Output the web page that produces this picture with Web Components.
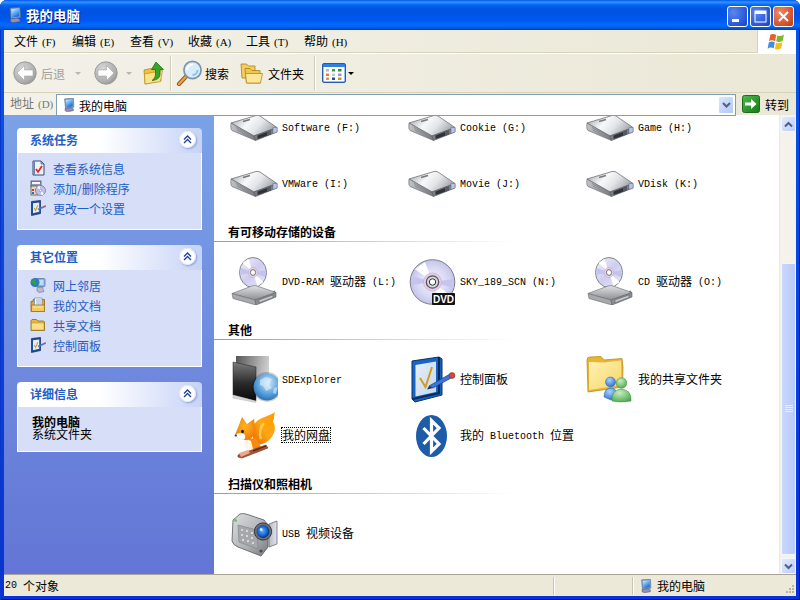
<!DOCTYPE html>
<html lang="zh-CN">
<head>
<meta charset="utf-8">
<title>我的电脑</title>
<style>
  html, body { margin: 0; padding: 0; background: #fff; }
  body { width: 800px; height: 600px; overflow: hidden; font: 12px "Noto Sans CJK SC", sans-serif; }
</style>
</head>
<body>
<xp-window>
  <xp-titlebar title="我的电脑"></xp-titlebar>
  <xp-menubar></xp-menubar>
  <xp-toolbar></xp-toolbar>
  <xp-addressbar></xp-addressbar>
  <xp-main>
    <xp-sidebar slot="side">
      <xp-panel title="系统任务">
        <xp-link icon="sysinfo">查看系统信息</xp-link>
        <xp-link icon="addremove">添加/删除程序</xp-link>
        <xp-link icon="settings">更改一个设置</xp-link>
      </xp-panel>
      <xp-panel title="其它位置">
        <xp-link icon="network">网上邻居</xp-link>
        <xp-link icon="mydocs">我的文档</xp-link>
        <xp-link icon="folder16">共享文档</xp-link>
        <xp-link icon="settings">控制面板</xp-link>
      </xp-panel>
      <xp-panel title="详细信息" details>
        <b>我的电脑</b><br>系统文件夹
      </xp-panel>
    </xp-sidebar>
    <xp-content slot="content">
      <xp-grid>
        <xp-item icon="drive" label="Software (F:)"></xp-item>
        <xp-item icon="drive" label="Cookie (G:)"></xp-item>
        <xp-item icon="drive" label="Game (H:)"></xp-item>
        <xp-item icon="drive" label="VMWare (I:)"></xp-item>
        <xp-item icon="drive" label="Movie (J:)"></xp-item>
        <xp-item icon="drive" label="VDisk (K:)"></xp-item>
      </xp-grid>
      <xp-section title="有可移动存储的设备"></xp-section>
      <xp-grid>
        <xp-item icon="cddrive" label="DVD-RAM 驱动器 (L:)"></xp-item>
        <xp-item icon="dvd" label="SKY_189_SCN (N:)"></xp-item>
        <xp-item icon="cddrive" label="CD 驱动器 (O:)"></xp-item>
      </xp-grid>
      <xp-section title="其他"></xp-section>
      <xp-grid>
        <xp-item icon="sdexplorer" label="SDExplorer"></xp-item>
        <xp-item icon="control" label="控制面板"></xp-item>
        <xp-item icon="shared" label="我的共享文件夹"></xp-item>
        <xp-item icon="fox" label="我的网盘" focused></xp-item>
        <xp-item icon="bluetooth" label="我的 Bluetooth 位置"></xp-item>
      </xp-grid>
      <xp-section title="扫描仪和照相机"></xp-section>
      <xp-grid>
        <xp-item icon="camera" label="USB 视频设备"></xp-item>
      </xp-grid>
    </xp-content>
    <xp-scrollbar slot="scroll"></xp-scrollbar>
  </xp-main>
  <xp-statusbar></xp-statusbar>
</xp-window>

<script>
const MENUS = [['文件', '(F)'], ['编辑', '(E)'], ['查看', '(V)'], ['收藏', '(A)'], ['工具', '(T)'], ['帮助', '(H)']];

const ICONS = {
  computer: { box: 16, body: `
    <defs><linearGradient id="s" x1="0" y1="0" x2=".6" y2="1"><stop offset="0" stop-color="#e4f4ff"/><stop offset=".5" stop-color="#63b4f4"/><stop offset="1" stop-color="#1668d8"/></linearGradient></defs>
    <path d="M3 1 13 .3 13.5 10.5 4 12Z" fill="#8fa6c8" stroke="#4f618c" stroke-width=".7"/>
    <path d="M4.3 2.2 12 1.6 12.3 9.4 5 10.6Z" fill="url(#s)"/>
    <path d="M3.5 12 10 11 13 12.5V14.5L6 15.8 3.5 14.5Z" fill="#9090b6" stroke="#55557f" stroke-width=".6"/>` },
  sysinfo: { box: 16, body: `
    <path d="M3 1H11L14 4V15H3Z" fill="#eef2fb" stroke="#39496e"/>
    <path d="M11 1V4H14Z" fill="#8fb0e8" stroke="#39496e" stroke-width=".6"/>
    <path d="M3.5 1.5H5V14.5H3.5Z" fill="#6a80ad"/>
    <path d="M6 9 8 12 12 6" fill="none" stroke="#e02b20" stroke-width="1.8"/>` },
  addremove: { box: 16, body: `
    <rect x="1" y="1" width="10" height="6" fill="#8d9cba" stroke="#46506c" stroke-width=".8"/>
    <rect x="2" y="2" width="8" height="2" fill="#f2f4f8"/>
    <rect x="1" y="6" width="7" height="9" fill="#e3dcc3" stroke="#5c5844" stroke-width=".8"/>
    <rect x="2" y="9" width="2" height="2" fill="#d33"/><rect x="5" y="9" width="2" height="2" fill="#3a3"/>
    <rect x="2" y="12" width="2" height="2" fill="#36c"/>
    <circle cx="10.5" cy="10.5" r="5" fill="#bfc0ee" stroke="#6d6d98" stroke-width=".7"/>
    <path d="M10.5 10.5 7 7 9.5 5.7Z M10.5 10.5 14 14 11.5 15.3Z" fill="#fff"/>
    <circle cx="10.5" cy="10.5" r="1.2" fill="#fff" stroke="#66667f" stroke-width=".5"/>` },
  settings: { box: 16, body: `
    <path d="M1.5 1.5 10.5 .5V13.5L1.5 15.5Z" fill="#1a4f9c" stroke="#172a55" stroke-width=".7"/>
    <path d="M3 3.2 9.2 2.4V11.8L3 13.2Z" fill="#e6edf9"/>
    <path d="M4.2 8 5.6 10.4 7.8 5.2" fill="none" stroke="#cfa521" stroke-width="1.1"/>
    <path d="M8 9.5 14.5 6.5" stroke="#3f78d8" stroke-width="1.7"/>
    <circle cx="15" cy="6.3" r="1" fill="#d04a3a"/>` },
  network: { box: 16, body: `
    <rect x="5.5" y="1.5" width="9.5" height="8" rx="1" fill="#7fb2ee" stroke="#6a7ba5" stroke-width=".8"/>
    <path d="M7 3H13.5V8H7Z" fill="#bcdcfb"/>
    <path d="M7 10.5H13V12.5L14 14.5 9 15.5 7 14Z" fill="#b9b9d3" stroke="#72729a" stroke-width=".6"/>
    <circle cx="5" cy="5.5" r="4.5" fill="#2a75d9"/>
    <path d="M2 3.5 4.5 2 6.5 3 5.5 5 6.5 6.5 4.5 9 3.5 6.5 1.2 5.2ZM7.5 5 9 5.5 8.5 8 7.3 7Z" fill="#2fa33a"/>` },
  mydocs: { box: 16, body: `
    <path d="M1 4.5H3V2.5H14.5V14.5H1Z" fill="#e2a93a" stroke="#8a6313" stroke-width=".8"/>
    <path d="M4.5 1H12V9H4.5Z" fill="#fff" stroke="#6d7fa8" stroke-width=".7"/>
    <path d="M6 3H11M6 5H11M6 7H11" stroke="#88a7dd"/>
    <path d="M1.5 8H14.5V14.5H1.5Z" fill="#f5cb5b" stroke="#96701a" stroke-width=".7"/>
    <path d="M3 10H13" stroke="#fbe7a5"/>` },
  folder16: { box: 16, body: `
    <path d="M1 3.5 2 2.5H6.5L8 4H13.5L14.5 5V13.5H1Z" fill="#e8b53f" stroke="#8a6a15" stroke-width=".8"/>
    <path d="M1.5 6H14V13H1.5Z" fill="#fbdf86" stroke="#b08a26" stroke-width=".5"/>` },
  back: { box: 24, body: `
    <defs><radialGradient id="g" cx=".35" cy=".3" r=".85"><stop offset="0" stop-color="#d6d6d6"/><stop offset=".7" stop-color="#aeaeae"/><stop offset="1" stop-color="#868686"/></radialGradient></defs>
    <circle cx="12" cy="12" r="11.2" fill="url(#g)" stroke="#9b9b9b"/>
    <path d="M4 12 11.5 4.5V9H20V15H11.5V19.5Z" fill="#fff" stroke="#999" stroke-width=".5"/>` },
  forward: { box: 24, body: `
    <defs><radialGradient id="g" cx=".35" cy=".3" r=".85"><stop offset="0" stop-color="#d6d6d6"/><stop offset=".7" stop-color="#aeaeae"/><stop offset="1" stop-color="#868686"/></radialGradient></defs>
    <circle cx="12" cy="12" r="11.2" fill="url(#g)" stroke="#9b9b9b"/>
    <path d="M20 12 12.5 4.5V9H4V15H12.5V19.5Z" fill="#fff" stroke="#999" stroke-width=".5"/>` },
  up: { box: 24, body: `
    <path d="M1 9 8 7.5 10 9 16.5 7.5 18 20 2 23Z" fill="#f0c33f" stroke="#a97f15" stroke-width=".7"/>
    <path d="M1.5 13 19.5 9.5 17.5 20.5 2 23Z" fill="#fde28a" stroke="#b88e22" stroke-width=".7"/>
    <path d="M13 1 20.5 8.5H17V13C17 17 14 19 9 19.5 12 17.5 12.5 15 12.5 13V8.5H8.5Z" fill="#38a526" stroke="#1e6f18" stroke-width=".8"/>` },
  search: { box: 26, body: `
    <path d="M3 24 10.5 16" stroke="#8a5a1c" stroke-width="4.2" stroke-linecap="round"/>
    <path d="M3 24 10.5 16" stroke="#f0a040" stroke-width="2.4" stroke-linecap="round"/>
    <circle cx="16.5" cy="10" r="8.6" fill="#d8ecfb" stroke="#7d93ad" stroke-width="1.7"/>
    <path d="M11 10A6 6 0 0 1 17 4.5" fill="none" stroke="#fff" stroke-width="2"/>
    <path d="M21.5 10A5 5 0 0 1 16.5 15" fill="none" stroke="#8dc0ea" stroke-width="2"/>` },
  folders: { box: 24, body: `
    <path d="M1 3H6.5L8.5 5H15V17H2Z" fill="#f2cd60" stroke="#a8821c" stroke-width=".8"/>
    <path d="M5 7.5H10L12 9.5H20L20.5 22H6.5Z" fill="#f0c64e" stroke="#a8821c" stroke-width=".8"/>
    <path d="M5.5 12.5H22.5L20.5 22H6.5Z" fill="#fde69a" stroke="#b08a22" stroke-width=".8"/>` },
  views: { box: 24, body: `
    <rect x=".5" y=".5" width="23" height="19" rx="1.5" fill="#2f7fe6" stroke="#235cb0"/>
    <rect x="1.5" y="4" width="21" height="14.5" fill="#fff"/>
    <path d="M4 6h3v2.5H4z" fill="#aeb7c6"/><path d="M10 6h3v2.5h-3z" fill="#3c9b46"/><path d="M16 6h3.5v2.5H16z" fill="#2f8a3a"/>
    <path d="M4 10.5h3V13H4z" fill="#ee7a4a"/><path d="M10 10.5h3V13h-3z" fill="#c4cbd8"/><path d="M16 10.5h3.5V13H16z" fill="#7f9fdc"/>
    <path d="M4 14.5h3V17H4z" fill="#ef8a5a"/><path d="M10 14.5h3V17h-3z" fill="#1f4da8"/><path d="M16 14.5h3.5V17H16z" fill="#c49a20"/>` },
  go: { box: 18, body: `
    <defs><linearGradient id="g" x1="0" y1="0" x2="1" y2="1"><stop offset="0" stop-color="#4fb94f"/><stop offset="1" stop-color="#157a15"/></linearGradient></defs>
    <rect x=".5" y=".5" width="17" height="17" rx="2" fill="url(#g)" stroke="#1d6b1d"/>
    <path d="M3 7.5H9V4L14.5 9 9 14V10.5H3Z" fill="#fff"/>` },
  flag: { box: 20, body: `
    <path d="M3.2 3C5 1.5 7 2 9.2 3L8 9.2C6 8.2 3.8 8 2 9.2Z" fill="#e8602c"/>
    <path d="M10.3 3.4C12.5 4.4 14.5 4.4 17 2.6L15.7 8.8C13.5 10.3 11.3 10.3 9.2 9.6Z" fill="#7bb72e"/>
    <path d="M1.8 10.4C3.6 9.2 5.8 9.3 7.8 10.4L6.6 16.5C4.6 15.3 2.5 15.3.6 16.7Z" fill="#3f8fe0"/>
    <path d="M9 10.8C11 11.6 13.2 11.6 15.5 10.1L14.2 16.2C12 17.8 9.8 17.8 7.8 17Z" fill="#f4bd1c"/>` },
  drive: { box: 48, body: `
    <defs>
      <linearGradient id="t" x1="0" y1="0" x2="1" y2=".4"><stop offset="0" stop-color="#9ea2a6"/><stop offset=".45" stop-color="#f7f8f9"/><stop offset=".7" stop-color="#e2e4e8"/><stop offset="1" stop-color="#a8acb2"/></linearGradient>
      <linearGradient id="f" x1="0" y1="0" x2="1" y2="0"><stop offset="0" stop-color="#c2c4c8"/><stop offset="1" stop-color="#74787e"/></linearGradient>
    </defs>
    <path d="M1 20 26 12.5Q28 12 30 13L47 24.5 24 33Z" fill="url(#t)" stroke="#6f7378" stroke-width=".8"/>
    <path d="M1 20 24 33 25.5 37.5 2 27.5Q.5 26 .8 23Z" fill="url(#f)" stroke="#5f6368" stroke-width=".6"/>
    <path d="M24 33 47 24.5V29L25.5 37.5Z" fill="#7b7f85" stroke="#4f5257" stroke-width=".6"/>
    <path d="M27.5 32.5 41 27.5V31.2L27.5 36Z" fill="#2f3236"/>
    <path d="M37 29 41 27.5V31.2L37 32.7Z" fill="#585c62"/>
    <path d="M43 24.5 47 24.5V29L43 30.5Z" fill="#b9c3ea" stroke="#676f8f" stroke-width=".5"/>
    <path d="M6 24.5 21 32.5M7 27 21 34" stroke="#82868b" stroke-width=".8"/>
    <path d="M13 18.5 20 16.5" stroke="#777b80" stroke-width="1.6"/>` },
  cddrive: { box: 48, body: `
    <defs>
      <linearGradient id="d" x1="0" y1="0" x2="1" y2="1"><stop offset="0" stop-color="#f2f2fb"/><stop offset=".5" stop-color="#cfcdf0"/><stop offset="1" stop-color="#e9e9f7"/></linearGradient>
      <linearGradient id="f" x1="0" y1="0" x2="0" y2="1"><stop offset="0" stop-color="#e2e3e6"/><stop offset="1" stop-color="#8b8e93"/></linearGradient>
    </defs>
    <ellipse cx="23" cy="15.5" rx="13.5" ry="15" fill="url(#d)" stroke="#84868c"/>
    <path d="M23 15.5 12.5 6 18.5 2ZM23 15.5 33.5 25 27.5 29Z" fill="#fff"/>
    <path d="M23 15.5 10 18 11 11ZM23 15.5 36 13 35 20Z" fill="#c3c4ee"/>
    <ellipse cx="23" cy="15.5" rx="4.6" ry="5" fill="#e8d5ea" stroke="#c9a7d0" stroke-width=".7"/>
    <ellipse cx="23" cy="15.5" rx="2.6" ry="2.9" fill="#fff" stroke="#6e6e72"/>
    <path d="M2 36.5 22 29Q25 28 27 29L46 35.5 25 43Z" fill="url(#f)" stroke="#75787d" stroke-width=".7"/>
    <path d="M2 36.5 25 43 26 48 3 41.5Z" fill="#a7a9ad" stroke="#66696e" stroke-width=".6"/>
    <path d="M25 43 46 35.5V40L26 48Z" fill="#8a8d92" stroke="#5c5f64" stroke-width=".6"/>
    <path d="M29 43 43 38V40.5L29 45.8Z" fill="#c9cbcf" stroke="#55585c" stroke-width=".5"/>
    <path d="M43 34.8 45 34.2" stroke="#3ba33b" stroke-width="1.4"/>` },
  dvd: { box: 48, body: `
    <defs><radialGradient id="d" cx=".5" cy=".5" r=".55"><stop offset="0" stop-color="#f4f4fc"/><stop offset=".6" stop-color="#d9d9f4"/><stop offset="1" stop-color="#bdbde6"/></radialGradient></defs>
    <circle cx="24.5" cy="25" r="22.3" fill="url(#d)" stroke="#7b7d84"/>
    <path d="M24.5 25 7 12 17 5ZM24.5 25 42 38 32 45Z" fill="#fff"/>
    <path d="M24.5 25 3 28 3.5 19ZM24.5 25 46 22 45.5 31Z" fill="#c4c4ef"/>
    <circle cx="24.5" cy="25" r="9" fill="#e6cfe8" stroke="#d2a8d6" stroke-width=".8"/>
    <circle cx="24.5" cy="25" r="6.2" fill="#d6d6dc" stroke="#55565b" stroke-width="1.3"/>
    <circle cx="24.5" cy="25" r="3.2" fill="#fff" stroke="#333" stroke-width="1"/>
    <rect x="24" y="36" width="23" height="12" rx="1" fill="#131313"/>
    <text x="35.5" y="45.6" text-anchor="middle" font-family="Liberation Sans, sans-serif" font-weight="700" font-size="10" fill="#fff">DVD</text>` },
  sdexplorer: { box: 48, body: `
    <defs>
      <linearGradient id="b" x1="0" y1="0" x2="1" y2=".2"><stop offset="0" stop-color="#555"/><stop offset="1" stop-color="#cfcfcf"/></linearGradient>
      <linearGradient id="f" x1="0" y1="0" x2="0" y2="1"><stop offset="0" stop-color="#7c7c7c"/><stop offset=".55" stop-color="#2a2a2a"/><stop offset="1" stop-color="#080808"/></linearGradient>
      <radialGradient id="g" cx=".55" cy=".35" r=".75"><stop offset="0" stop-color="#cfe8fb"/><stop offset=".6" stop-color="#4f9ad8"/><stop offset="1" stop-color="#1f5e9e"/></radialGradient>
    </defs>
    <path d="M6 1H39V36H6Z" fill="url(#b)"/>
    <path d="M3 7 26 12V46L3 40Z" fill="url(#f)" stroke="#222" stroke-width=".5"/>
    <path d="M3 40 26 46V47.5L3 43Z" fill="#d9d9d9" stroke="#aaa" stroke-width=".4"/>
    <circle cx="37" cy="32" r="15" fill="#000" opacity=".18"/>
    <circle cx="37" cy="32" r="13.5" fill="url(#g)"/>
    <path d="M30 25 36 22 42 24 39 29 42 33 36 36 33 31 30 30ZM44 33 47.5 32 46 39 43 38Z" fill="#eaf5fd" opacity=".55"/>` },
  control: { box: 48, body: `
    <defs><linearGradient id="p" x1="0" y1="0" x2="1" y2="1"><stop offset="0" stop-color="#e8eff9"/><stop offset="1" stop-color="#c4d6ef"/></linearGradient></defs>
    <path d="M4 6 31 2 34 4V40L7 47 4 44Z" fill="#1466c8" stroke="#10305f" stroke-width="1"/>
    <path d="M31 2V38L4.5 44" fill="none" stroke="#0c2b57" stroke-width="2.2"/>
    <path d="M7.5 10 28 6.5V37L7.5 41.5Z" fill="url(#p)"/>
    <path d="M12 23 17.5 32 24 12" fill="none" stroke="#cf9d10" stroke-width="1.9"/>
    <path d="M21 31 25 33 44 22.5 42 19Z" fill="#3b76d8" stroke="#1d3d86" stroke-width=".7"/>
    <path d="M21 31 19 34.5 25 33Z" fill="#22304f"/>
    <circle cx="44" cy="20.5" r="2.9" fill="#d44a3a" stroke="#7e2a22" stroke-width=".6"/>` },
  shared: { box: 48, body: `
    <defs>
      <linearGradient id="y" x1="0" y1="0" x2="1" y2="1"><stop offset="0" stop-color="#fff3b6"/><stop offset="1" stop-color="#f9d566"/></linearGradient>
      <radialGradient id="bp" cx=".4" cy=".3" r=".8"><stop offset="0" stop-color="#a9d4ff"/><stop offset="1" stop-color="#1d64c8"/></radialGradient>
      <radialGradient id="gp" cx=".4" cy=".3" r=".8"><stop offset="0" stop-color="#c8efc0"/><stop offset="1" stop-color="#45a547"/></radialGradient>
    </defs>
    <path d="M1 5Q1 2 4 2L15 1.5 18 5 36 3.5 37 12 36.5 32 2 37Z" fill="#e9b535" stroke="#b98b1d" stroke-width=".8"/>
    <path d="M3 7 18 7.5 35 5.5 35.5 30 3 35Z" fill="url(#y)"/>
    <path d="M18 42Q18 33 25 33 31 33 32 42L25 45Z" fill="url(#bp)" stroke="#2b5fa3" stroke-width=".5"/>
    <circle cx="24.5" cy="27" r="5" fill="url(#bp)" stroke="#2b5fa3" stroke-width=".5"/>
    <path d="M26 46Q25 35 35 34 46 35 45 46 35 48 26 46Z" fill="url(#gp)" stroke="#3b8a3d" stroke-width=".5"/>
    <circle cx="35.5" cy="28" r="5.3" fill="url(#gp)" stroke="#3b8a3d" stroke-width=".5"/>` },
  fox: { box: 48, body: `
    <defs>
      <linearGradient id="t" x1="1" y1="0" x2="0" y2="1"><stop offset="0" stop-color="#ff9a00"/><stop offset=".5" stop-color="#ffa814"/><stop offset="1" stop-color="#e86400"/></linearGradient>
      <radialGradient id="h" cx=".5" cy=".4" r=".7"><stop offset="0" stop-color="#ffb522"/><stop offset="1" stop-color="#ec7000"/></radialGradient>
    </defs>
    <path d="M27 33C19 25 21 11 32 7 37 5 43 3 45 1 44 5 44 8 43 11 47 16 44 26 38 30 34 33 30 34 27 33Z" fill="url(#t)"/>
    <path d="M34 12C30 16 29 23 31 28" fill="none" stroke="#ffc94a" stroke-width="2.5"/>
    <path d="M15 28 26 27 31 36 23 40 16 37Z" fill="#f58a0c"/>
    <path d="M15 27 21 30 23 38 28 40 19 42 14 35Z" fill="#fff5e2"/>
    <g transform="translate(4 2)">
      <path d="M3 17 8 4 13 11 20 6 21.5 16Q21.5 25 13 27 4 27 1 22Z" fill="url(#h)"/>
      <path d="M1 22Q7 18 11 22 12 26 9 27 4 26 1 22Z" fill="#fff"/>
      <ellipse cx="8.5" cy="18.5" rx="1.4" ry="1.8" fill="#1a1a2e"/>
      <ellipse cx="1.8" cy="22.5" rx="1.2" ry="1" fill="#33364d"/>
    </g>
    <path d="M8 44 36 34 38 37 12 47 8 46Z" fill="#a7553a" stroke="#6b2f1e" stroke-width=".6"/>
    <path d="M9 42 18 39 20 42 11 46Z" fill="#f0a78c"/>
    <path d="M23 40 36 35" stroke="#4e2517" stroke-width="1.2"/>` },
  bluetooth: { box: 48, body: `
    <ellipse cx="23.5" cy="25" rx="15.5" ry="21" fill="#1f5ca8"/>
    <path d="M15.5 17 31 33 23.5 40.5V9.5L31 17 15.5 33" fill="none" stroke="#fff" stroke-width="3.2" stroke-linejoin="miter"/>` },
  camera: { box: 48, body: `
    <defs>
      <linearGradient id="b" x1="0" y1="0" x2="1" y2="1"><stop offset="0" stop-color="#dcdedf"/><stop offset=".6" stop-color="#aeb0b4"/><stop offset="1" stop-color="#76797d"/></linearGradient>
      <linearGradient id="s" x1="0" y1="0" x2="1" y2="0"><stop offset="0" stop-color="#b9bcc2"/><stop offset="1" stop-color="#dfe2f4"/></linearGradient>
      <radialGradient id="l" cx=".45" cy=".45" r=".55"><stop offset="0" stop-color="#5fb4ff"/><stop offset=".7" stop-color="#155fd0"/><stop offset="1" stop-color="#0c2e77"/></radialGradient>
    </defs>
    <path d="M39 15 47 12V35L39 38Z" fill="url(#s)" stroke="#6a6d72" stroke-width=".8"/>
    <path d="M3 11 10 5Q12 4 16 5L34 11 38 16V38L31 47 8 38Q3 36 2 32Z" fill="url(#b)" stroke="#55585c" stroke-width=".8"/>
    <path d="M8 16 27 21 28 40 9 33Z" fill="#a5a8ab" stroke="#7c7f84" stroke-width=".6"/>
    <path d="M11 20h2v2h-2zM16 21h2v2h-2zM21 23h2v2h-2zM11 25h2v2h-2zM16 26h2v2h-2zM21 28h2v2h-2zM12 30h2v2h-2zM17 31h2v2h-2zM22 33h2v2h-2z" fill="#d6d8db"/>
    <circle cx="33" cy="22.5" r="8.6" fill="#6d7176" stroke="#33363a"/>
    <circle cx="33" cy="22.5" r="6.4" fill="url(#l)"/>
    <circle cx="31.2" cy="20.5" r="1.5" fill="#d8efff"/>
    <circle cx="5.5" cy="11.5" r="1.4" fill="#5ec85e"/>
    <circle cx="31" cy="42" r="1.6" fill="#45484c"/>` }
};

// ascii runs are 10px mono so they get the 6px advance of the original bitmap font
function mix(text) {
  return text.replace(/[\x20-\x7e]+/g, m => `<span class="a">${m}</span>`);
}
const MIX_CSS = `
  .a { font: 10px/1 "Liberation Mono", monospace; white-space: pre; vertical-align: 1px; }
  .k { font: 11px/1 "Liberation Serif", serif; margin-left: 4px; }`;
const BAR_BG = 'linear-gradient(90deg, #f3f1e8, #ebe8d7)';

class XpIcon extends HTMLElement {
  connectedCallback() {
    const icon = ICONS[this.getAttribute('name')];
    const size = this.getAttribute('size') || icon.box;
    this.attachShadow({ mode: 'open' }).innerHTML = `<style>:host { display: block; width: ${size}px; height: ${size}px; flex: none; white-space: normal; } svg { display: block; }</style><svg width="${size}" height="${size}" viewBox="0 0 ${icon.box} ${icon.box}">${icon.body}</svg>`;
  }
}

class XpWindow extends HTMLElement {
  connectedCallback() {
    this.attachShadow({ mode: 'open' }).innerHTML = `
      <style>
        :host {
          display: flex; flex-direction: column; box-sizing: border-box;
          width: 800px; height: 600px;
          font: 12px "Noto Sans CJK SC", sans-serif; color: #000;
          border-radius: 7px 7px 0 0; overflow: hidden;
          background: linear-gradient(180deg, #0558e8, #0831d9);
          padding: 0 4px 4px;
          box-shadow: inset 1px 0 #0a37c8, inset -1px 0 #00138c, inset 0 -1px #00138c;
        }
      </style>
      <slot></slot>`;
  }
}

class XpTitlebar extends HTMLElement {
  connectedCallback() {
    this.attachShadow({ mode: 'open' }).innerHTML = `
      <style>
        :host {
          display: flex; align-items: center; height: 30px; flex: none;
          margin: 0 -4px; padding: 0 6px 0 7px;
          background: linear-gradient(180deg, #0058ee 0, #3593ff 7%, #127dff 12%, #0262ee 18%, #0057e5 26%, #0054e3 40%, #0055eb 60%, #005bf5 72%, #026afe 82%, #0062ef 90%, #0052d6 95%, #0040ab 100%);
        }
        .t { margin-left: 3px; flex: 1; color: #fff; font-weight: 700; font-size: 13.5px; text-shadow: 1px 1px #0f1089; margin-top: -1px; }
        .b {
          width: 21px; height: 21px; margin-left: 2px; box-sizing: border-box; margin-top: 3px;
          border: 1px solid #fff; border-radius: 3px;
          display: flex; align-items: center; justify-content: center;
          background: radial-gradient(circle at 30% 30%, #5a87ee, #2555d8 70%, #1c3fc0);
        }
        .x { background: radial-gradient(circle at 30% 30%, #ee8a6a, #d9522a 65%, #b83a18); }
        svg { display: block; }
      </style>
      <xp-icon name="computer" size="16"></xp-icon>
      <div class="t">${this.getAttribute('title')}</div>
      <div class="b"><svg width="15" height="15"><rect x="2" y="10" width="7" height="3" fill="#fff"/></svg></div>
      <div class="b"><svg width="15" height="15"><rect x="2" y="2" width="11" height="11" fill="none" stroke="#fff"/><rect x="2" y="2" width="11" height="3" fill="#fff"/></svg></div>
      <div class="b x"><svg width="15" height="15"><path d="M3 3 12 12M12 3 3 12" stroke="#fff" stroke-width="2"/></svg></div>`;
  }
}

class XpMenubar extends HTMLElement {
  connectedCallback() {
    this.attachShadow({ mode: 'open' }).innerHTML = `
      <style>
        :host {
          display: flex; height: 23px; flex: none; box-sizing: border-box;
          background: ${BAR_BG}; border-bottom: 1px solid #d8d2bd;
          padding-left: 5px; align-items: center;
        }
        ${MIX_CSS}
        .m { padding: 0 5px; width: 48px; white-space: pre; line-height: 14px; margin-top: -1px; }
        .flag { margin-left: auto; align-self: stretch; width: 39px; background: #fff; border-left: 1px solid #d8d2bd; display: flex; align-items: center; justify-content: center; margin-bottom: -1px; box-sizing: border-box; }
      </style>
      ${MENUS.map(([t, k]) => `<div class="m">${t}<span class="k">${k}</span></div>`).join('')}
      <div class="flag"><xp-icon name="flag"></xp-icon></div>`;
  }
}

class XpToolbar extends HTMLElement {
  connectedCallback() {
    this.attachShadow({ mode: 'open' }).innerHTML = `
      <style>
        :host {
          display: flex; align-items: center; height: 40px; flex: none; box-sizing: border-box;
          background: ${BAR_BG}; border-top: 1px solid #fff; border-bottom: 1px solid #d8d2bd;
          padding-left: 9px; white-space: pre;
        }
        .g { color: #a2a09a; }
        .drop { width: 0; height: 0; border: 3px solid transparent; border-top: 3px solid #b9b7ad; border-bottom: 0; }
        .drop.k { border-top-color: #000; }
        .sep { width: 1px; height: 35px; background: #d0ccb8; box-shadow: 1px 0 #fff; }
      </style>
      <xp-icon name="back" size="24"></xp-icon>
      <span class="g" style="margin-left:4px">后退</span>
      <i class="drop" style="margin-left:10px"></i>
      <xp-icon name="forward" size="24" style="margin-left:13px"></xp-icon>
      <i class="drop" style="margin-left:8px"></i>
      <xp-icon name="up" size="24" style="margin-left:11px"></xp-icon>
      <i class="sep" style="margin-left:3px"></i>
      <xp-icon name="search" size="26" style="margin-left:5px"></xp-icon>
      <span style="margin-left:3px">搜索</span>
      <xp-icon name="folders" size="24" style="margin-left:11px"></xp-icon>
      <span style="margin-left:4px">文件夹</span>
      <i class="sep" style="margin-left:10px"></i>
      <xp-icon name="views" size="24" style="margin-left:7px;margin-top:3px"></xp-icon>
      <i class="drop k" style="margin-left:2px"></i>`;
  }
}

class XpAddressbar extends HTMLElement {
  connectedCallback() {
    // the field's bottom border sits one pixel over the main area
    this.attachShadow({ mode: 'open' }).innerHTML = `
      <style>
        :host {
          display: flex; align-items: flex-start; height: 22px; flex: none; box-sizing: border-box;
          background: ${BAR_BG}; padding: 1px 0 0 6px; white-space: pre;
          position: relative; z-index: 1;
        }
        ${MIX_CSS}
        .l { color: #7a7869; width: 46px; line-height: 20px; margin-top: -1px; }
        .f {
          width: 680px; height: 22px; box-sizing: border-box; flex: none;
          border: 1px solid #7f9db9; background: #fff;
          display: flex; align-items: center; padding: 0 1px 0 5px;
        }
        .f span.v { margin-left: 3px; flex: 1; }
        .dd {
          width: 16px; height: 18px; border-radius: 2px; border: 1px solid #fff; box-sizing: border-box;
          background: linear-gradient(135deg, #dbe6fe, #b2c8f8);
          display: flex; align-items: center; justify-content: center;
        }
        .go { display: flex; align-items: center; margin: 1px 0 0 6px; }
        .go span { margin-left: 5px; }
      </style>
      <div class="l">地址<span class="k">(D)</span></div>
      <div class="f">
        <xp-icon name="computer" size="14"></xp-icon>
        <span class="v">我的电脑</span>
        <div class="dd"><svg width="9" height="7"><path d="M1 1 4.5 4.5 8 1" fill="none" stroke="#4d6185" stroke-width="2"/></svg></div>
      </div>
      <div class="go"><xp-icon name="go"></xp-icon><span>转到</span></div>`;
  }
}

class XpMain extends HTMLElement {
  connectedCallback() {
    this.attachShadow({ mode: 'open' }).innerHTML = `
      <style>:host { display: flex; flex: 1; min-height: 0; background: #fff; }</style>
      <slot name="side"></slot><slot name="content"></slot><slot name="scroll"></slot>`;
  }
}

class XpSidebar extends HTMLElement {
  connectedCallback() {
    this.attachShadow({ mode: 'open' }).innerHTML = `
      <style>
        :host {
          display: flex; flex-direction: column; gap: 15px; box-sizing: border-box;
          width: 210px; flex: none; padding: 13px 12px 0 13px;
          background: linear-gradient(180deg, #7ba2e7, #6375d6);
        }
      </style>
      <slot></slot>`;
  }
}

class XpPanel extends HTMLElement {
  connectedCallback() {
    const details = this.hasAttribute('details');
    this.attachShadow({ mode: 'open' }).innerHTML = `
      <style>
        :host { display: block; }
        .h {
          display: flex; align-items: center; justify-content: space-between; height: 25px; box-sizing: border-box;
          padding: 0 6px 2px 13px; border-radius: 4px 4px 0 0;
          background: linear-gradient(90deg, #fff 45%, #c6d3f7);
          color: #215dc6; font-weight: 700;
        }
        .c {
          width: 17px; height: 17px; border-radius: 50%; background: #fff; box-sizing: border-box;
          box-shadow: 1px 1px 2px #8a9cd0, inset 0 0 0 1px #dfe6f8;
          display: flex; align-items: center; justify-content: center;
        }
        .b {
          background: #d6dff7; border: 1px solid #fff; border-top: 0;
          padding: ${details ? '9px 0 11px 14px' : '5px 0 11px 12px'};
          line-height: ${details ? '12px' : 'normal'};
        }
        svg { display: block; }
      </style>
      <div class="h"><span>${this.getAttribute('title')}</span>
        <div class="c"><svg width="9" height="9"><path d="M1 4.5 4.5 1 8 4.5M1 8 4.5 4.5 8 8" fill="none" stroke="#1c3f9a" stroke-width="1.3"/></svg></div>
      </div>
      <div class="b"><slot></slot></div>`;
  }
}

class XpLink extends HTMLElement {
  connectedCallback() {
    this.attachShadow({ mode: 'open' }).innerHTML = `
      <style>
        :host { display: flex; align-items: center; height: 20px; color: #215dc6; gap: 7px; }
      </style>
      <xp-icon name="${this.getAttribute('icon')}" size="16"></xp-icon><span><slot></slot></span>`;
  }
}

class XpContent extends HTMLElement {
  connectedCallback() {
    this.attachShadow({ mode: 'open' }).innerHTML = `
      <style>
        :host { display: block; flex: 1; min-width: 0; overflow: hidden; background: #fff; }
        .in { margin-top: -16px; }
      </style>
      <div class="in"><slot></slot></div>`;
  }
}

class XpGrid extends HTMLElement {
  connectedCallback() {
    this.attachShadow({ mode: 'open' }).innerHTML = `
      <style>:host { display: grid; grid-template-columns: repeat(3, 178px); grid-auto-rows: 56px; padding-left: 14px; }</style>
      <slot></slot>`;
  }
}

class XpSection extends HTMLElement {
  connectedCallback() {
    this.attachShadow({ mode: 'open' }).innerHTML = `
      <style>
        :host { display: block; box-sizing: border-box; height: 42px; padding-top: 12px; }
        .t { padding-left: 14px; height: 18px; font-weight: 700; line-height: 18px; }
        .l { height: 1px; width: 300px; background: linear-gradient(90deg, #70a2e4, #fff); }
      </style>
      <div class="t">${this.getAttribute('title')}</div><div class="l"></div>`;
  }
}

class XpItem extends HTMLElement {
  connectedCallback() {
    const focused = this.hasAttribute('focused');
    this.attachShadow({ mode: 'open' }).innerHTML = `
      <style>
        :host { display: flex; align-items: center; padding-left: 2px; gap: 4px; white-space: pre; }
        ${MIX_CSS}
        .lb { line-height: 14px; ${focused ? 'outline: 1px dotted #000; outline-offset: 0;' : ''} }
      </style>
      <xp-icon name="${this.getAttribute('icon')}"></xp-icon>
      <span class="lb">${mix(this.getAttribute('label'))}</span>`;
  }
}

class XpScrollbar extends HTMLElement {
  connectedCallback() {
    this.attachShadow({ mode: 'open' }).innerHTML = `
      <style>
        :host {
          display: flex; flex-direction: column; width: 17px; flex: none; box-sizing: border-box;
          background: #f4f2ea; border-left: 1px solid #ebe9e0; padding-top: 1px;
        }
        .btn, .thumb {
          box-sizing: border-box; width: 15px; margin-left: 1px; border-radius: 2px; flex: none;
          border: 1px solid #f2f6ff; background: linear-gradient(135deg, #e1eafe, #bccdfb);
          display: flex; align-items: center; justify-content: center;
        }
        .btn { height: 16px; }
        .thumb { height: 292px; margin-top: 131px; margin-bottom: 3px; background: linear-gradient(90deg, #c9d7fc, #b7cafa); }
        svg { display: block; }
      </style>
      <div class="btn"><svg width="9" height="7"><path d="M1 5.5 4.5 2 8 5.5" fill="none" stroke="#4d6185" stroke-width="2"/></svg></div>
      <div class="thumb"><svg width="8" height="8"><path d="M0 .5H8M0 2.5H8M0 4.5H8M0 6.5H8" stroke="#e8eefe"/></svg></div>
      <div class="btn"><svg width="9" height="7"><path d="M1 1.5 4.5 5 8 1.5" fill="none" stroke="#4d6185" stroke-width="2"/></svg></div>`;
  }
}

class XpStatusbar extends HTMLElement {
  connectedCallback() {
    this.attachShadow({ mode: 'open' }).innerHTML = `
      <style>
        :host {
          display: flex; align-items: center; height: 22px; flex: none; box-sizing: border-box;
          background: #ece9d8; border-top: 1px solid #a8a598; padding-left: 1px; white-space: pre;
        }
        ${MIX_CSS}
        .p { display: flex; align-items: center; height: 18px; border-right: 1px solid #c9c5b2; box-shadow: 1px 0 #fff; }
        .grip { margin-left: auto; align-self: flex-end; margin-right: 1px; }
      </style>
      <div class="p" style="width:548px">${mix('20 个对象')}</div>
      <div class="p" style="width:78px"></div>
      <xp-icon name="computer" size="14" style="margin-left:6px"></xp-icon>
      <span style="margin-left:4px">我的电脑</span>
      <svg class="grip" width="12" height="12"><path d="M9 1h2v2H9zM6 4h2v2H6zM9 4h2v2H9zM3 7h2v2H3zM6 7h2v2H6zM9 7h2v2H9z" fill="#b8b4a2"/></svg>`;
  }
}

customElements.define('xp-icon', XpIcon);
customElements.define('xp-window', XpWindow);
customElements.define('xp-titlebar', XpTitlebar);
customElements.define('xp-menubar', XpMenubar);
customElements.define('xp-toolbar', XpToolbar);
customElements.define('xp-addressbar', XpAddressbar);
customElements.define('xp-main', XpMain);
customElements.define('xp-sidebar', XpSidebar);
customElements.define('xp-panel', XpPanel);
customElements.define('xp-link', XpLink);
customElements.define('xp-content', XpContent);
customElements.define('xp-grid', XpGrid);
customElements.define('xp-section', XpSection);
customElements.define('xp-item', XpItem);
customElements.define('xp-scrollbar', XpScrollbar);
customElements.define('xp-statusbar', XpStatusbar);
</script>
</body>
</html>
